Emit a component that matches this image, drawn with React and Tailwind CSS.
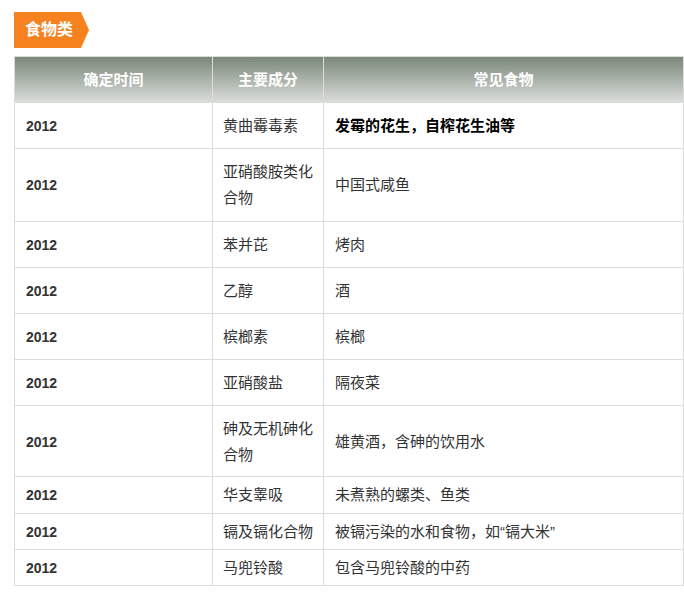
const ROWS = [
  { year: '2012', name: ['黄曲霉毒素'], food: '发霉的花生，自榨花生油等', bold: true, pad: 'pt-[10px] pb-[9px]' },
  { year: '2012', name: ['亚硝酸胺类化', '合物'], food: '中国式咸鱼', pad: 'pt-[10px] pb-[10px]' },
  { year: '2012', name: ['苯并芘'], food: '烤肉', pad: 'pt-[10px] pb-[9px]' },
  { year: '2012', name: ['乙醇'], food: '酒', pad: 'pt-[10px] pb-[9px]' },
  { year: '2012', name: ['槟榔素'], food: '槟榔', pad: 'pt-[10px] pb-[9px]' },
  { year: '2012', name: ['亚硝酸盐'], food: '隔夜菜', pad: 'pt-[10px] pb-[9px]' },
  { year: '2012', name: ['砷及无机砷化', '合物'], food: '雄黄酒，含砷的饮用水', pad: 'pt-[10px] pb-[8px]' },
  { year: '2012', name: ['华支睾吸'], food: '未煮熟的螺类、鱼类', pad: 'pt-[5px] pb-[5px]' },
  { year: '2012', name: ['镉及镉化合物'], food: '被镉污染的水和食物，如“镉大米”', pad: 'pt-[5px] pb-[4px]' },
  { year: '2012', name: ['马兜铃酸'], food: '包含马兜铃酸的中药', pad: 'pt-[5px] pb-[4px]' },
];

const cjk = "font-['Liberation_Sans','Noto_Sans_CJK_SC',sans-serif]";

function Tag() {
  return (
    <div className="flex h-[36px]">
      <div className={`flex items-center bg-[#f5821f] pl-[11px] pr-[8px] text-[16px] font-bold text-white ${cjk}`}>
        食物类
      </div>
      <span className="h-0 w-0 border-y-[18px] border-l-[8px] border-y-transparent border-l-[#f5821f]" />
    </div>
  );
}

export default function App() {
  return (
    <div className={`min-h-[598px] bg-white pl-[14px] pt-[12px] ${cjk}`}>
      <Tag />
      <table className="mt-[8px] w-[670px] table-fixed border-collapse text-[15px] leading-[26px] text-[#333]">
        <colgroup>
          <col className="w-[198px]" />
          <col className="w-[111px]" />
          <col />
        </colgroup>
        <thead>
          <tr className="h-[46px] bg-gradient-to-b from-[#7b8879] to-[#dde0dd] text-white">
            <th className="border border-[#dcdcdc] font-bold">确定时间</th>
            <th className="border border-[#dcdcdc] font-bold">主要成分</th>
            <th className="border border-[#dcdcdc] font-bold">常见食物</th>
          </tr>
        </thead>
        <tbody>
          {ROWS.map((r, i) => (
            <tr key={i}>
              <td className={`border border-[#dcdcdc] pl-[11px] text-[14px] font-bold ${r.pad}`}>{r.year}</td>
              <td className={`border border-[#dcdcdc] px-[10px] ${r.pad}`}>
                {r.name.map((n, j) => (
                  <div key={j}>{n}</div>
                ))}
              </td>
              <td className={`border border-[#dcdcdc] px-[11px] ${r.pad} ${r.bold ? 'font-bold text-black' : ''}`}>
                {r.food}
              </td>
            </tr>
          ))}
        </tbody>
      </table>
    </div>
  );
}
